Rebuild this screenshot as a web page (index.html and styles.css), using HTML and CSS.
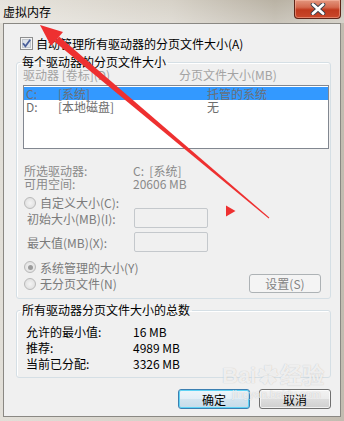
FILE: index.html
```html
<!DOCTYPE html>
<html lang="zh-CN">
<head>
    <meta charset="UTF-8">
    <title>虚拟内存</title>
    <link rel="stylesheet" href="styles.css">
</head>
<body>

<div class="window">
    <div class="titlebar">
        <span class="title">虚拟内存</span>
        <span class="close-btn">
            <svg width="16" height="12" viewBox="0 0 16 12">
                <path d="M3 1.5 L13 10.5 M13 1.5 L3 10.5" stroke="#3a3f4a" stroke-width="4.6" stroke-linecap="round"/>
                <path d="M3 1.5 L13 10.5 M13 1.5 L3 10.5" stroke="#fff" stroke-width="2.8" stroke-linecap="round"/>
            </svg>
        </span>
    </div>

    <div class="client">
        <div class="check-row">
            <svg class="checkbox" width="13" height="13" viewBox="0 0 13 13">
                <rect x="0.5" y="0.5" width="12" height="12" fill="#f4f4f4" stroke="#8e8f8f"/>
                <rect x="2.5" y="2.5" width="8" height="8" fill="#dfe4ea" stroke="#c2c7cd"/>
                <path d="M3 6.2 L5.4 9.2 L10.2 2.8" fill="none" stroke="#4a5f9a" stroke-width="1.8"/>
            </svg>
            <span>自动管理所有驱动器的分页文件大小(A)</span>
        </div>

        <fieldset class="group">
            <legend>每个驱动器的分页文件大小</legend>
            <div class="group-body">
                <div class="list-head">
                    <span>驱动器 [卷标](D)</span>
                    <span>分页文件大小(MB)</span>
                </div>
                <div class="drive-list">
                    <div class="drive-row selected">
                        <span>C:</span><span>[系统]</span><span>托管的系统</span>
                    </div>
                    <div class="drive-row">
                        <span>D:</span><span>[本地磁盘]</span><span>无</span>
                    </div>
                </div>

                <div class="info">
                    <span>所选驱动器:</span><span>C:  [系统]</span>
                    <span>可用空间:</span><span>20606 MB</span>
                </div>

                <div class="radio-row first">
                    <span class="radio"></span>
                    <span>自定义大小(C):</span>
                </div>
                <div class="field-row">
                    <span class="field-label">初始大小(MB)(I):</span>
                    <span class="textbox"></span>
                </div>
                <div class="field-row">
                    <span class="field-label">最大值(MB)(X):</span>
                    <span class="textbox"></span>
                </div>

                <div class="radio-row second">
                    <span class="radio on"></span>
                    <span>系统管理的大小(Y)</span>
                </div>
                <div class="radio-row last">
                    <span class="radio"></span>
                    <span>无分页文件(N)</span>
                    <span class="btn disabled">设置(S)</span>
                </div>
            </div>
        </fieldset>

        <fieldset class="group total">
            <legend>所有驱动器分页文件大小的总数</legend>
            <div class="total-body">
                <span>允许的最小值:</span><span>16 MB</span>
                <span>推荐:</span><span>4989 MB</span>
                <span>当前已分配:</span><span>3326 MB</span>
            </div>
        </fieldset>

        <div class="actions">
            <span class="btn default">确定</span>
            <span class="btn">取消</span>
        </div>
    </div>

    <div class="watermark">
        <div class="wm-logo">Bai<span class="paw">&#10047;</span>经验</div>
        <div class="wm-url">jingyan.baidu.com</div>
    </div>

    <!-- red arrow drawn over the screenshot -->
    <svg class="arrow" width="344" height="421" viewBox="0 0 344 421">
        <polygon points="40,25 63,32 51,46" fill="#ee3030"/>
        <polygon points="54.6,41.7 59.1,36.4 269.3,217.6 268.7,218.4" fill="#ee3030"/>
        <polygon points="226,205.5 226,216.5 235.5,211" fill="#ee3030"/>
    </svg>
</div>

</body>
</html>
```

FILE: styles.css
```css
body {
    margin: 0;
    font-family: "Noto Sans CJK SC", sans-serif;
    font-size: 12px;
    color: #000;
    background: #d8d4cc;
}

.window {
    position: relative;
    width: 344px;
    height: 421px;
    background: linear-gradient(to right, #e2dfd8, #d3cfc6 55%, #c2bcb0);
    overflow: hidden;
}

.titlebar {
    height: 23px;
    display: flex;
    justify-content: space-between;
    align-items: flex-start;
    background: linear-gradient(to bottom, rgba(255, 255, 255, 0) 0%, rgba(255, 255, 255, 0.25) 100%),
                linear-gradient(to right, #e6e3dc, #d6d1c7 50%, #b9b2a4 80%, #c9c4b9);
}

.title {
    padding: 2px 0 0 3px;
    line-height: 20px;
    font-size: 12px;
}

.close-btn {
    width: 45px;
    height: 18px;
    margin-right: 3px;
    display: flex;
    align-items: center;
    justify-content: center;
    border: 1px solid #5d2418;
    border-top: none;
    border-radius: 0 0 4px 4px;
    background: linear-gradient(to bottom, #e3967e 0%, #d46a4f 40%, #c0391d 55%, #c9482b 100%);
    box-shadow: inset 0 0 0 1px rgba(255, 200, 180, 0.45);
}

.client {
    box-sizing: border-box;
    height: 394px;
    margin: 0 3px;
    padding: 12px 9px 0 12px;
    background: #f0f0f0;
    border: 1px solid #8a8883;
}

.check-row {
    display: flex;
    align-items: center;
    height: 14px;
    padding-left: 4px;
    gap: 3px;
}

.checkbox {
    display: block;
}

.group {
    margin: 6px 0 0 0;
    padding: 0;
    width: 315px;
    box-sizing: border-box;
    border: 1px solid #d5dfe5;
    border-radius: 3px;
    box-shadow: inset 1px 1px 0 #fff;
}

.group legend {
    margin-left: 3px;
    padding: 0 2px;
    line-height: 12px;
}

.group-body {
    padding: 1px 1px 5px 6px;
}

.list-head {
    display: grid;
    grid-template-columns: 156px 1fr;
    line-height: 12px;
    color: #a3a3a3;
}

.drive-list {
    box-sizing: border-box;
    height: 64px;
    margin-top: 4px;
    padding-top: 1px;
    border: 1px solid #828790;
    background: #fff;
}

.drive-row {
    display: grid;
    grid-template-columns: 32px 149px 1fr;
    height: 13px;
    line-height: 13px;
    padding-left: 2px;
    color: #6d6d6d;
    white-space: pre;
}

.drive-row.selected {
    background: #3399ff;
    color: #6a6f78;
}

.info {
    display: grid;
    grid-template-columns: 109px 1fr;
    grid-auto-rows: 13px;
    line-height: 13px;
    margin-top: 15px;
    padding-left: 1px;
    color: #8a8a8a;
    white-space: pre;
}

.radio-row {
    display: flex;
    align-items: center;
    gap: 4px;
    padding-left: 1px;
    color: #7b7b7b;
}

.radio-row.first {
    height: 11px;
    margin-top: 7px;
}

.radio-row.second {
    height: 12px;
    margin-top: 9px;
}

.radio-row.last {
    height: 19px;
    margin-top: 1px;
}

.radio {
    box-sizing: border-box;
    width: 12px;
    height: 12px;
    border-radius: 50%;
    border: 1px solid #b9b9b9;
    background: radial-gradient(circle at 50% 50%, #f4f4f4 0%, #e2e2e2 70%, #d6d6d6 100%);
    display: flex;
    align-items: center;
    justify-content: center;
}

.radio.on::after {
    content: "";
    width: 5px;
    height: 5px;
    border-radius: 50%;
    background: #9b9b9b;
}

.field-row {
    display: flex;
    align-items: center;
    height: 20px;
    padding-left: 4px;
    color: #7b7b7b;
}

.field-row + .field-row {
    margin-top: 4px;
}

.field-label {
    width: 107px;
}

.textbox {
    box-sizing: border-box;
    width: 74px;
    height: 20px;
    border: 1px solid #c4c8cc;
    border-radius: 2px;
    background: #f0f0f0;
}

.btn {
    box-sizing: border-box;
    width: 72px;
    height: 20px;
    display: flex;
    align-items: center;
    justify-content: center;
    border: 1px solid #707070;
    border-radius: 3px;
    background: linear-gradient(to bottom, #f2f2f2 0%, #ebebeb 50%, #dddddd 51%, #cfcfcf 100%);
    box-shadow: inset 0 0 0 1px rgba(255, 255, 255, 0.7);
    color: #000;
}

.btn.disabled {
    margin-left: auto;
    margin-right: 8px;
    height: 19px;
    border-color: #adb2b5;
    background: #f4f4f4;
    box-shadow: none;
    color: #838383;
}

.btn.default {
    border-color: #3c7fb1;
    background: linear-gradient(to bottom, #edf5fa 0%, #e2eef6 50%, #d3e4ef 51%, #c6dbe9 100%);
    box-shadow: inset 0 0 0 1px #5fd3f5;
}

.total {
    margin-top: 5px;
}

.total-body {
    display: grid;
    grid-template-columns: 107px 1fr;
    grid-auto-rows: 16px;
    line-height: 16px;
    padding: 8px 0 5px 9px;
}

.actions {
    display: flex;
    justify-content: flex-end;
    gap: 9px;
    margin-top: 11px;
}

.watermark {
    position: absolute;
    left: 222px;
    top: 364px;
    color: rgba(255, 255, 255, 0.75);
    text-shadow: 0 0 1px rgba(120, 120, 120, 0.45);
    pointer-events: none;
}

.wm-logo {
    font-family: "Liberation Sans", sans-serif;
    font-size: 22px;
    font-weight: bold;
    line-height: 24px;
}

.wm-logo .paw {
    font-size: 20px;
    margin: 0 2px;
}

.wm-url {
    font-family: "Liberation Sans", sans-serif;
    font-size: 11px;
    line-height: 12px;
    padding-left: 10px;
}

.arrow {
    position: absolute;
    left: 0;
    top: 0;
    pointer-events: none;
}
```
